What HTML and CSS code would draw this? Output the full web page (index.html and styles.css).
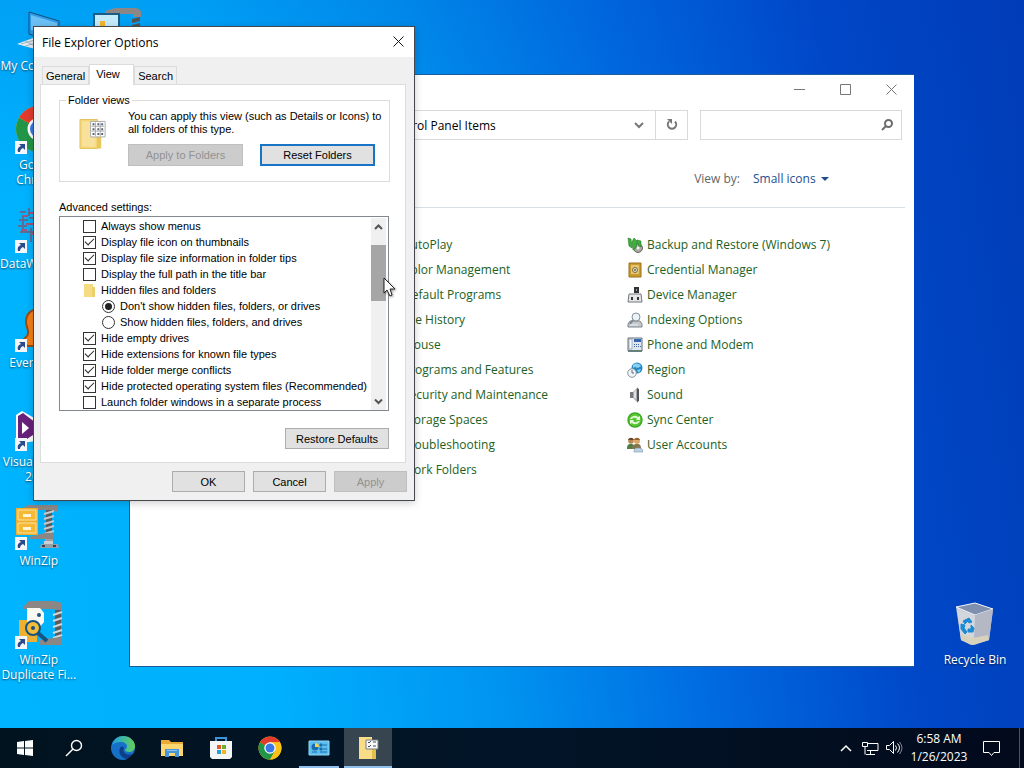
FILE: index.html
```html
<!DOCTYPE html>
<html lang="en">
<head>
    <meta charset="utf-8">
    <title>Desktop</title>
    <link rel="stylesheet" href="styles.css">
</head>
<body>

    <!-- shared symbols -->
    <svg class="symbols" width="0" height="0" aria-hidden="true">
        <symbol id="shortcut" viewBox="0 0 12 13">
            <rect width="12" height="13" fill="#f4f6fa"/>
            <path d="M4 3h6v6L8 7c-2 1-3 2-3 4H3C2 8 3 6 6 5z" fill="#2b4a8c"/>
        </symbol>
        <symbol id="clamp" viewBox="0 0 48 48">
            <path d="M6 8l7-4h29v7l-6-2H6z" fill="#8c8784"/>
            <path d="M31 9h6v24h-6z" fill="#5c5b5c"/>
            <path d="M29 13l10-3M29 18l10-3M29 23l10-3M29 28l10-3M29 33l10-3" stroke="#c6c8ca" stroke-width="2"/>
            <path d="M14 36l16-4h8v6H14z" fill="#8c8784"/>
            <path d="M30 38h8v5h5l1 4H25l1-4h4z" fill="#99a0a5"/>
            <path d="M29 40h9v3h-9z" fill="#c9cfd2"/>
            <path d="M27 44h3v2h-3zM38 44h3v2h-3z" fill="#33414f"/>
        </symbol>
        <symbol id="chrome" viewBox="0 0 48 48">
            <circle cx="24" cy="24" r="23" fill="#fbc116"/>
            <path d="M24 24L4.100 12.500A23 23 0 0 0 24 47l10-17.200z" fill="#229648"/>
            <path d="M24 24L4.100 12.500A23 23 0 0 1 43.900 12.500H24z" fill="#e23b2e"/>
            <path d="M24 12.500h19.900A23 23 0 0 1 24 47l10-17.200z" fill="#fbc116"/>
            <circle cx="24" cy="24" r="11.500" fill="#fff"/>
            <circle cx="24" cy="24" r="9" fill="#3b78e7"/>
        </symbol>
    </svg>

    <main class="desktop">
        <ul class="shortcuts">
            <li>
                <a href="#" class="shortcut">
                    <svg viewBox="0 0 48 48"><path d="M14 6l30 9v22l-30-9z" fill="#2e9be8" stroke="#174f7c"/><path d="M16 9l26 8v8L16 24z" fill="#6bc0f5"/><path d="M2 38l16-6 14 6-12 5z" fill="#e7eef3"/><path d="M6 38l14-4M10 40l14-4M10 35l12 6" stroke="#9fb4c2"/></svg>
                    <span>My&nbsp;Computer</span>
                </a>
            </li>
            <li>
                <a href="#" class="shortcut">
                    <svg viewBox="0 0 48 48"><use href="#chrome"/><use href="#shortcut" x="0" y="36" width="12" height="13"/></svg>
                    <span>Google Chrome</span>
                </a>
            </li>
            <li>
                <a href="#" class="shortcut">
                    <svg viewBox="0 0 48 48"><path d="M5 8h6M14 4v8M4 16h9M8 11v14M14 14h6v8M3 22h9M5 28h14M16 24v14M20 8v14M22 30v8" stroke="#5a6e96" stroke-width="2" fill="none"/><path d="M8 12h5M11 20h7M6 26h6M16 30h6M15 9h5" stroke="#a5547a" stroke-width="2"/><use href="#shortcut" x="0" y="36" width="12" height="13"/></svg>
                    <span>DataWrangler</span>
                </a>
            </li>
            <li>
                <a href="#" class="shortcut">
                    <svg viewBox="0 0 48 48"><path d="M24 6c-8 0-13 5-13 13 0 5 3 7 2 12-1 4-5 4-6 8l6 4h20V6z" fill="#f57f17" stroke="#9a4c12" stroke-width="2"/><use href="#shortcut" x="0" y="36" width="12" height="13"/></svg>
                    <span>Everything</span>
                </a>
            </li>
            <li>
                <a href="#" class="shortcut">
                    <svg viewBox="0 0 48 48"><path d="M1 13l6-4 14 8v22l-14 2-6-3z" fill="#fff"/><path d="M3 14l5-3 13 10v10L9 39l-6-2z" fill="#68217a"/><path d="M7 20l7 6-7 6z" fill="#fff"/><use href="#shortcut" x="0" y="36" width="12" height="13"/></svg>
                    <span>Visual Studio 2022</span>
                </a>
            </li>
            <li>
                <a href="#" class="shortcut">
                    <svg viewBox="0 0 48 48"><use href="#clamp"/><rect x="1" y="7" width="22" height="27" fill="#efaf2c"/><path d="M3 9h18v10H3zM3 22h18v10H3z" fill="#f5b935" stroke="#fbe3a0"/><path d="M8 13h8v3H8zM8 26h8v3H8z" fill="#fff6da"/><use href="#shortcut" x="0" y="36" width="12" height="13"/></svg>
                    <span>WinZip</span>
                </a>
            </li>
            <li>
                <a href="#" class="shortcut">
                    <svg viewBox="0 0 48 48"><path d="M9 6l5-5h25l8 2v8l-9-2H9z" fill="#8c8784"/><path d="M40 10h6v28h-6z" fill="#5c5b5c"/><path d="M38 15l9-3M38 21l9-3M38 27l9-3M38 33l9-3M38 38l9-3" stroke="#d3d5d7" stroke-width="2"/><path d="M24 40l14-2 9-1v8H24z" fill="#8c8784"/><path d="M4 20h18v22H4z" fill="#eeb02e"/><path d="M12 8h13l4 5v9l-5 6H12z" fill="#fbfaf2"/><circle cx="24" cy="15" r="2" fill="#20547e"/><circle cx="18" cy="28" r="7" fill="#f6bd3a" stroke="#17537f" stroke-width="2"/><circle cx="18" cy="28" r="2" fill="#17537f"/><path d="M23 33l9 8" stroke="#17537f" stroke-width="4"/><use href="#shortcut" x="0" y="36" width="12" height="13"/></svg>
                    <span>WinZip Duplicate&nbsp;Fi...</span>
                </a>
            </li>
        </ul>

        <svg class="zip-folder" viewBox="0 0 48 48"><path d="M12 4l10-3h22l4 3v6h-8V7H12z" fill="#8c8784"/><path d="M39 12l8-2v4l-8 2zM39 18l8-2v4l-8 2z" fill="#525456"/><path d="M1 7h25v30H1z" fill="#c4ebfb" stroke="#1c5d85" stroke-width="2"/><path d="M7 14h5v10H7z" fill="#f1b42f"/></svg>

        <a href="#" class="shortcut recycle-bin">
            <svg viewBox="0 0 48 48"><path d="M5 7l19-4 18 6-4 31-18 5-10-5z" fill="#c9cdd5"/><path d="M5 7l19-4 18 6-18 6z" fill="#7f8fae" stroke="#eef2f7" stroke-width="1"/><path d="M24 15l18-6-4 31-15 5z" fill="#b3b8c4"/><path d="M6 9l4 31 12 5 2-29z" fill="#d3d6dc"/><path d="M10 40l12 5 16-5-1-5-15 3-12-4z" fill="#d8d2bd"/><path d="M12 21l6-3 3 4-3 1-1-2-3 3zM10 24l4 1-1 3 3 4-2 2-4-5zM20 25l3 3-1 4h-5v-3h3z" fill="#1a8ad4" stroke="#1a8ad4"/></svg>
            <span>Recycle Bin</span>
        </a>

        <!-- Control Panel -->
        <section class="window">
            <div class="window-buttons">
                <button type="button" aria-label="Minimize"><svg width="11" height="11"><path d="M0 5.500h11"/></svg></button>
                <button type="button" aria-label="Maximize"><svg width="11" height="11"><path d="M.5.5h10v10H.5z"/></svg></button>
                <button type="button" aria-label="Close"><svg width="11" height="11"><path d="M.5.5l10 10M10.500.5l-10 10"/></svg></button>
            </div>
            <div class="nav-row">
                <div class="address">
                    <span>All Control Panel Items</span>
                    <button type="button" aria-label="Previous locations"><svg width="10" height="8"><path d="M1 1l4 4 4-4" stroke="#777" stroke-width="2" fill="none"/></svg></button>
                    <button type="button" class="refresh" aria-label="Refresh"><svg width="12" height="12"><path d="M3 3.500a4.200 4.200 0 1 0 6 0" stroke="#777" stroke-width="2" fill="none"/><path d="M1 1h5v5z" fill="#777"/></svg></button>
                </div>
                <div class="search">
                    <input type="text" aria-label="Search Control Panel">
                    <svg width="12" height="12"><circle cx="7.500" cy="4.500" r="3.500" stroke="#6c6c6c" stroke-width="2" fill="none"/><path d="M5 7l-4 4" stroke="#6c6c6c" stroke-width="2"/></svg>
                </div>
            </div>
            <div class="view-by">
                <label for="view">View by:</label>
                <div class="view-select">
                    <select id="view">
                        <option>Small icons</option>
                    </select>
                </div>
            </div>
            <div class="items">
                <ul>
                    <li><a href="#">AutoPlay</a></li>
                    <li><a href="#">Color Management</a></li>
                    <li><a href="#">Default Programs</a></li>
                    <li><a href="#">File History</a></li>
                    <li><a href="#">Mouse</a></li>
                    <li><a href="#">Programs and Features</a></li>
                    <li><a href="#">Security and Maintenance</a></li>
                    <li><a href="#">Storage Spaces</a></li>
                    <li><a href="#">Troubleshooting</a></li>
                    <li><a href="#">Work Folders</a></li>
                </ul>
                <ul>
                    <li><svg viewBox="0 0 16 16"><circle cx="11" cy="11" r="4.500" fill="#a9a9a4" stroke="#66675f"/><circle cx="11" cy="11" r="1.500" fill="#f2f2ee"/><path d="M1 1l3 1 1 9-3-2zM5 5l2-4 3 3-1 7-3 2zM10 3l4 1v6l-3-2z" fill="#3fae3a" stroke="#257c2a" stroke-width=".6"/></svg><a href="#">Backup and Restore (Windows 7)</a></li>
                    <li><svg viewBox="0 0 16 16"><path d="M2 1h12v14H2z" fill="#c99b2d" stroke="#9a701b"/><path d="M4 3h8v9H4z" fill="#e5c670"/><circle cx="8" cy="8" r="2.500" fill="#e8e4d6" stroke="#7d6a35"/><circle cx="8" cy="8" r="1" fill="#665"/></svg><a href="#">Credential Manager</a></li>
                    <li><svg viewBox="0 0 16 16"><path d="M7 0h5v6H7z" fill="#2f3134"/><path d="M2 7h12l1 8H1z" fill="#e5e6e8" stroke="#75777b"/><path d="M4 10h2v3H4zM10 10h2v3h-2z" fill="#333"/><path d="M9 2h1v2H9z" fill="#a0a0a0"/></svg><a href="#">Device Manager</a></li>
                    <li><svg viewBox="0 0 16 16"><path d="M3 9h10l2 3v3H1v-3z" fill="#c3c9ce" stroke="#7d858c"/><circle cx="9" cy="5" r="4" fill="#eaf3f8" stroke="#879199"/><path d="M6 8l-3 4" stroke="#7f8990" stroke-width="2"/><path d="M3 13h8" stroke="#eef0f2"/></svg><a href="#">Indexing Options</a></li>
                    <li><svg viewBox="0 0 16 16"><path d="M1 1h14v13H1z" fill="#dfe7ee" stroke="#60707d"/><path d="M2 2h3v10H2z" fill="#f9fafb" stroke="#7a8893" stroke-width=".6"/><path d="M7 2h7v3H7z" fill="#3465ae"/><path d="M7 7h1v1H7zM9 7h1v1H9zM11 7h1v1h-1zM7 9h1v1H7zM9 9h1v1H9zM11 9h1v1h-1zM13 9h1v1h-1z" fill="#4269a4"/><path d="M1 13h14v2H1z" fill="#687f80"/></svg><a href="#">Phone and Modem</a></li>
                    <li><svg viewBox="0 0 16 16"><circle cx="10" cy="6" r="5.500" fill="#2287c5"/><path d="M6 3c3-3 7-1 8 1l-3 2-3-1-2 1zM10 8l4-1-2 4z" fill="#8bd1ee"/><circle cx="5" cy="11" r="4.300" fill="#f1f5f8" stroke="#8997a2"/><path d="M5 8v3h2" stroke="#5d6c78" fill="none"/></svg><a href="#">Region</a></li>
                    <li><svg viewBox="0 0 16 16"><path d="M3 5h3v6H3z" fill="#77797c"/><path d="M6 5l5-5v16l-5-5z" fill="#a8abae"/><path d="M10 1l2 1v12l-2 1z" fill="#505357"/><path d="M7 5l2-2v9L7 11z" fill="#dfe1e2"/></svg><a href="#">Sound</a></li>
                    <li><svg viewBox="0 0 16 16"><circle cx="8" cy="8" r="7.700" fill="#38a720"/><circle cx="8" cy="8" r="6.500" fill="#58c532"/><path d="M3 7c2-4 6-4 8-2l2-1v4H9l1-1c-2-2-4-1-5 0zM13 9c-2 4-6 4-8 2l-2 1V8h4L6 9c2 2 4 1 5 0z" fill="#e2f7d6"/></svg><a href="#">Sync Center</a></li>
                    <li><svg viewBox="0 0 16 16"><path d="M0 12c0-5 2-5 4-5s4 1 4 5z" fill="#4d7e43"/><circle cx="4" cy="4" r="2.800" fill="#b98850"/><path d="M1 3c1-3 5-3 6 0z" fill="#6a4524"/><path d="M5 12c0-4 2-5 5-5s4 1 4 5z" fill="#86764f"/><circle cx="10" cy="4" r="3" fill="#dda76c"/><path d="M7 3c1-3 5-3 6 0z" fill="#94622c"/><path d="M7 15c0-4 2-4 4-4s5 0 5 4z" fill="#bcd2e6" stroke="#7b92a8" stroke-width=".6"/></svg><a href="#">User Accounts</a></li>
                </ul>
            </div>
        </section>

        <!-- File Explorer Options -->
        <section class="dialog">
            <div class="dialog-title">
                <h1>File Explorer Options</h1>
                <button type="button" aria-label="Close"><svg width="11" height="11"><path d="M.5.5l10 10M10.500.5l-10 10" stroke="#111"/></svg></button>
            </div>
            <form class="dialog-body">
                <div class="tabs">
                    <button type="button">General</button>
                    <button type="button" class="active">View</button>
                    <button type="button">Search</button>
                </div>
                <div class="panel">
                    <fieldset>
                        <legend>Folder views</legend>
                        <svg class="folder-icon" viewBox="0 0 30 32"><path d="M1 1h18v30H1z" fill="#f4d878" stroke="#e3c25b"/><path d="M19 4h4v27h-4z" fill="#e9c75d"/><path d="M3 3h14v26H3z" fill="#f8e19a"/><path d="M12 3h15v16H12z" fill="#fff" stroke="#aaa"/><path d="M13 8h13M13 13h13M17 4v14M22 4v14" stroke="#aaa"/><path d="M14 5h2v2h-2zM19 5h2v2h-2zM23 5h2v2h-2zM14 10h2v2h-2zM19 10h2v2h-2zM23 10h2v2h-2zM14 15h2v2h-2zM19 15h2v2h-2zM23 15h2v2h-2z" fill="#5a6474"/></svg>
                        <div class="folder-views">
                            <p>You can apply this view (such as Details or Icons) to all folders of this type.</p>
                            <div class="folder-buttons">
                                <button type="button" class="btn" disabled>Apply to Folders</button>
                                <button type="button" class="btn default">Reset Folders</button>
                            </div>
                        </div>
                    </fieldset>

                    <h2>Advanced settings:</h2>
                    <div class="settings">
                        <div class="settings-list">
                            <label><input type="checkbox">Always show menus</label>
                            <label><input type="checkbox" checked>Display file icon on thumbnails</label>
                            <label><input type="checkbox" checked>Display file size information in folder tips</label>
                            <label><input type="checkbox">Display the full path in the title bar</label>
                            <div class="group"><svg viewBox="0 0 13 13"><path d="M1 0h9v3h2v10H1z" fill="#f5dc82"/><path d="M9 3h3v10H9z" fill="#ecd06c"/></svg>Hidden files and folders</div>
                            <label class="sub"><input type="radio" name="hidden" checked>Don't show hidden files, folders, or drives</label>
                            <label class="sub"><input type="radio" name="hidden">Show hidden files, folders, and drives</label>
                            <label><input type="checkbox" checked>Hide empty drives</label>
                            <label><input type="checkbox" checked>Hide extensions for known file types</label>
                            <label><input type="checkbox" checked>Hide folder merge conflicts</label>
                            <label><input type="checkbox" checked>Hide protected operating system files (Recommended)</label>
                            <label><input type="checkbox">Launch folder windows in a separate process</label>
                        </div>
                        <div class="scrollbar">
                            <button type="button" aria-label="Scroll up"><svg width="9" height="7"><path d="M1 5l3.500-3.500L8 5"/></svg></button>
                            <div class="thumb"></div>
                            <button type="button" aria-label="Scroll down"><svg width="9" height="7"><path d="M1 1.500L4.500 5 8 1.500"/></svg></button>
                        </div>
                    </div>
                    <button type="button" class="btn restore">Restore Defaults</button>
                </div>
                <div class="dialog-buttons">
                    <button type="button" class="btn">OK</button>
                    <button type="button" class="btn">Cancel</button>
                    <button type="button" class="btn" disabled>Apply</button>
                </div>
            </form>
        </section>

        <svg class="cursor" viewBox="0 0 14 21"><path d="M1 1v15l3-3 3 6 2-1-2-6h5z" fill="#fff" stroke="#222"/></svg>
    </main>

    <footer class="taskbar">
        <button type="button" aria-label="Start"><svg width="16" height="16" viewBox="0 0 16 16"><path d="M0 2l7-1v6.500H0zM8 1l8-1v7.500H8zM0 8.500h7V15l-7-1zM8 8.500h8V16l-8-1z" fill="#fff"/></svg></button>
        <button type="button" aria-label="Search"><svg width="18" height="18" viewBox="0 0 18 18"><circle cx="11.500" cy="6.500" r="5" stroke="#fff" stroke-width="1.400" fill="none"/><path d="M8 10l-7 7" stroke="#fff" stroke-width="1.400"/></svg></button>
        <button type="button" aria-label="Microsoft Edge"><svg width="24" height="24" viewBox="0 0 24 24"><defs><linearGradient id="edge-a" x1="0" y1="0" x2="1" y2="0"><stop offset="0" stop-color="#1fa4dd"/><stop offset="1" stop-color="#62cf5a"/></linearGradient></defs><circle cx="12" cy="12" r="12" fill="#1670c8"/><path d="M1 9C3 3 7 0 12 0c7 0 12 5 12 10 0 4-3 6-6 6-2 0-4-1-4-2 0-1 2-1 2-4 0-2-3-4-6-4-4 0-7 1-9 3z" fill="url(#edge-a)"/><path d="M9 12c-2 5 1 10 7 11 3-1 5-3 7-6-3 2-7 2-9 0-2-1-2-3-1-5-1-2-3-2-4 0z" fill="#0c3f87"/><path d="M16 23c2-1 5-3 8-8v9h-9z" fill="#03131f"/></svg></button>
        <button type="button" aria-label="File Explorer"><svg width="22" height="20" viewBox="0 0 22 20"><path d="M0 2h8l2 2h12v14H0z" fill="#e9ab35"/><path d="M0 6h22v12H0z" fill="#fbd671"/><path d="M4 11h14v8h-4v-4H8v4H4z" fill="#4796d9"/><path d="M6 12h10v1H6z" fill="#8bc3ee"/></svg></button>
        <button type="button" aria-label="Microsoft Store"><svg width="24" height="24" viewBox="0 0 24 24"><path d="M7 6V2h10v4" fill="none" stroke="#3a95da" stroke-width="2"/><path d="M1 5h22v16l-2 2H3l-2-2z" fill="#f3f5f6"/><path d="M8 9h4v4H8z" fill="#e25a2b"/><path d="M13 9h4v4h-4z" fill="#6fae2c"/><path d="M8 14h4v4H8z" fill="#249fde"/><path d="M13 14h4v4h-4z" fill="#f3b41f"/></svg></button>
        <button type="button" aria-label="Google Chrome"><svg width="24" height="24"><use href="#chrome"/></svg></button>
        <button type="button" class="open" aria-label="Control Panel"><svg width="22" height="16" viewBox="0 0 22 16"><path d="M1 1h20v14H1z" fill="#5bbdf0" stroke="#8edaf9"/><circle cx="7" cy="7" r="3.500" fill="#1b6cae"/><path d="M7 7V3a4 4 0 0 1 4 4z" fill="#f6d24a"/><path d="M12 4h2v2h-2zM12 8h2v2h-2zM15 5h4M15 9h4M12 12h7M4 12h5" stroke="#1a6ea7" fill="#1a6ea7"/></svg></button>
        <button type="button" class="open current" aria-label="File Explorer Options"><svg width="22" height="24" viewBox="0 0 22 24"><path d="M2 1h13v22H2z" fill="#f8dd86"/><path d="M15 8h4v15h-4z" fill="#e5bd4d"/><path d="M9 4h12v9H9z" fill="#f7f8fa" stroke="#777c84"/><path d="M11 6l1 1 2-2M16 6h3M11 10l1 1 2-2M16 10h3" stroke="#444e60" fill="none"/></svg></button>

        <div class="tray">
            <button type="button" aria-label="Show hidden icons"><svg width="12" height="8"><path d="M1 7l5-5 5 5" stroke-width="1.500"/></svg></button>
            <button type="button" aria-label="Network"><svg width="17" height="14"><path d="M5 2.500h11v7H5M4 13.500h9M8.500 9.500v4M.5 1.500h5v4h-5zM3 5.500v8"/></svg></button>
            <button type="button" aria-label="Volume"><svg width="17" height="14"><path d="M.5 4.500h3l4-4v12l-4-4h-3zM9.500 4.500q2 2 0 5M11.500 2.500q4 4 0 9"/><path d="M13.500 1q5 6 0 12" opacity=".5"/></svg></button>
            <div class="clock"><span>6:58 AM</span><span>1/26/2023</span></div>
            <button type="button" class="notes" aria-label="Notifications"><svg width="17" height="17"><path d="M.5 1.500h16v11H11l-2.500 3-2.500-3H.5z"/></svg></button>
        </div>
    </footer>

</body>
</html>
```
FILE: styles.css
```css
* {
    box-sizing: border-box;
}

body {
    margin: 0;
    min-height: 100vh;
    display: flex;
    flex-direction: column;
    font-family: "Open Sans", "Noto Sans", sans-serif;
    font-size: 12px;
    background:
        linear-gradient(rgba(0, 60, 190, 0.15), transparent 200px),
        linear-gradient(82deg, #00b4ff 0%, #00b0fe 25%, #0094f0 45%, #0068e0 65%, #0048c8 82%, #003cb6 100%);
}

button,
input,
select {
    font: inherit;
    color: inherit;
    margin: 0;
}

button {
    padding: 0;
    border: none;
    background: none;
}

a {
    color: inherit;
    text-decoration: none;
}

ul {
    list-style: none;
    margin: 0;
    padding: 0;
}

.symbols {
    position: absolute;
}

.desktop {
    flex: 1;
    position: relative;
    overflow: hidden;
}

/* desktop icons */
.shortcuts {
    display: grid;
    grid-auto-rows: 99px;
    width: 76px;
    margin: 6px 0 0;
}

.shortcut {
    display: flex;
    flex-direction: column;
    align-items: center;
    gap: 4px;
    color: #fff;
    line-height: 15px;
    text-align: center;
    text-shadow: 0 1px 2px rgba(0, 0, 0, 0.6);
}

.shortcut svg {
    width: 48px;
    height: 48px;
    overflow: visible;
}

.zip-folder {
    position: absolute;
    left: 93px;
    top: 7px;
    width: 48px;
}

.recycle-bin {
    position: absolute;
    right: 11px;
    bottom: 61px;
    width: 76px;
}

/* control panel window */
.window {
    position: absolute;
    top: 74px;
    left: 129px;
    right: 110px;
    bottom: 61px;
    border: 1px solid #1d5c9c;
    border-right: none;
    background: #fff;
}

.window-buttons {
    display: flex;
    justify-content: flex-end;
}

.window-buttons button {
    width: 46px;
    height: 30px;
}

.window-buttons path {
    fill: none;
    stroke: #777;
}

.nav-row {
    display: flex;
    gap: 12px;
    padding: 5px 12px 0;
}

.address {
    flex: 1;
    display: flex;
    align-items: center;
    height: 30px;
    padding-left: 226px;
    border: 1px solid #d9d9d9;
}

.address span {
    flex: 1;
}

.address button {
    width: 32px;
    height: 28px;
}

.address .refresh {
    border-left: 1px solid #d9d9d9;
}

.search {
    display: flex;
    align-items: center;
    width: 202px;
    height: 30px;
    padding-right: 8px;
    border: 1px solid #d9d9d9;
}

.search input {
    flex: 1;
    min-width: 0;
    border: none;
    outline: none;
}

.view-by {
    display: flex;
    justify-content: flex-end;
    align-items: center;
    gap: 13px;
    height: 68px;
    margin-right: 9px;
    padding: 10px 76px 0 0;
    border-bottom: 1px solid #d5dfe5;
    color: #666;
}

.view-select {
    display: flex;
    align-items: center;
    gap: 5px;
    color: #1e4f8f;
}

.view-select::after {
    content: "";
    border: 4px solid transparent;
    border-top-color: #1e4f8f;
    border-bottom: none;
}

.view-select select {
    appearance: none;
    border: none;
    padding: 0;
    background: none;
}

.items {
    display: grid;
    grid-template-columns: 242px 1fr;
    margin: 24px 0 0 255px;
    color: #1c6124;
}

.items li {
    display: flex;
    align-items: center;
    gap: 4px;
    height: 25px;
}

.items ul:first-child {
    padding-left: 18px;
}

.items svg {
    width: 16px;
    height: 16px;
}

/* options dialog */
.dialog {
    position: absolute;
    left: 33px;
    top: 26px;
    width: 382px;
    border: 1px solid #44484c;
    background: #f0f0f0;
    box-shadow: 0 2px 8px rgba(0, 0, 0, 0.2);
}

.dialog-title {
    display: flex;
    justify-content: space-between;
    align-items: center;
    height: 30px;
    padding: 0 10px 0 8px;
    background: #fff;
}

.dialog-title h1 {
    margin: 0;
    font-size: 12px;
    font-weight: normal;
}

.dialog-body {
    padding: 7px 7px 8px 6px;
    font-family: "Liberation Sans", Arial, sans-serif;
    font-size: 11px;
}

.tabs {
    display: flex;
    align-items: flex-end;
    padding-left: 2px;
}

.tabs button {
    height: 18px;
    padding: 0 3px;
    border: 1px solid #dcdcdc;
    border-bottom: none;
}

.tabs .active {
    width: 45px;
    height: 21px;
    margin-bottom: -1px;
    padding: 0 14px 2px 6px;
    background: #fff;
    z-index: 1;
}

.panel {
    display: flex;
    flex-direction: column;
    margin-right: 1px;
    padding: 9px 16px 13px 18px;
    border: 1px solid #dcdcdc;
    background: #fff;
}

fieldset {
    display: flex;
    gap: 20px;
    height: 88px;
    margin: 0;
    padding: 4px 14px 0 19px;
    border: 1px solid #dcdcdc;
}

legend {
    margin-left: -13px;
    padding: 0 2px;
}

.folder-icon {
    flex: none;
    width: 29px;
    height: 32px;
    margin-top: 8px;
}

.folder-views p {
    margin: 0 -8px 8px 0;
    line-height: 13px;
}

.folder-buttons {
    display: flex;
    gap: 17px;
}

.btn {
    width: 73px;
    height: 21px;
    border: 1px solid #adadad;
    background: #e1e1e1;
}

.btn:disabled {
    border-color: #bfbfbf;
    background: #ccc;
    color: #929292;
}

.folder-buttons .btn {
    width: 115px;
    height: 22px;
}

.btn.default {
    border: 2px solid #1874c5;
}

.panel h2 {
    margin: 19px 0 2px;
    font-size: 11px;
    font-weight: normal;
    line-height: 13px;
}

.settings {
    display: flex;
    justify-content: space-between;
    padding: 1px 2px 0 23px;
    border: 1px solid #828790;
}

.settings label,
.settings .group {
    display: flex;
    align-items: center;
    gap: 5px;
    height: 16px;
    white-space: nowrap;
}

.settings .sub {
    padding-left: 19px;
}

.settings svg {
    flex: none;
}

.group svg {
    width: 13px;
    height: 13px;
}

.settings input {
    appearance: none;
    flex: none;
    display: grid;
    place-items: center;
    width: 13px;
    height: 13px;
    border: 1px solid #333;
    background: #fff;
}

.settings input[type="radio"] {
    border-radius: 50%;
}

.settings input[type="checkbox"]:checked::before {
    content: "";
    width: 8px;
    height: 4px;
    margin-bottom: 3px;
    border: solid #222;
    border-width: 0 0 1px 1px;
    transform: rotate(-45deg);
}

.settings input[type="radio"]:checked::before {
    content: "";
    width: 7px;
    height: 7px;
    border-radius: 50%;
    background: #222;
}

.scrollbar {
    display: flex;
    flex-direction: column;
    width: 15px;
    background: #f0f0f0;
}

.scrollbar button {
    height: 18px;
    line-height: 0;
}

.scrollbar button:last-child {
    margin-top: auto;
}

.scrollbar path {
    fill: none;
    stroke: #555;
    stroke-width: 2;
}

.thumb {
    height: 56px;
    margin-top: 9px;
    background: #a6a6a6;
}

.restore {
    align-self: flex-end;
    width: 104px;
    margin-top: 17px;
}

.dialog-buttons {
    display: flex;
    justify-content: flex-end;
    gap: 8px;
    padding-top: 8px;
}

.cursor {
    position: absolute;
    left: 383px;
    top: 277px;
    width: 14px;
    height: 21px;
    filter: drop-shadow(1px 1px 1px rgba(0, 0, 0, 0.4));
}

/* taskbar */
.taskbar {
    display: flex;
    gap: 1px;
    height: 40px;
    padding-left: 1px;
    background: linear-gradient(90deg, #01131f, #021528 50%, #020a1c);
    color: #fff;
}

.taskbar > button {
    display: grid;
    place-items: center;
    width: 48px;
    height: 40px;
}

.taskbar .open {
    background: linear-gradient(#8fc0ee, #8fc0ee) center bottom / 40px 2px no-repeat;
}

.taskbar .current {
    background: linear-gradient(#8fc0ee, #8fc0ee) center bottom / 48px 2px no-repeat #36454f;
}

.tray {
    display: flex;
    align-items: center;
    margin-left: auto;
    margin-right: 4px;
    border-right: 1px solid #47536a;
}

.tray button {
    display: grid;
    place-items: center;
    width: 24px;
    height: 40px;
}

.tray path {
    fill: none;
    stroke: #fff;
}

.clock {
    display: flex;
    flex-direction: column;
    align-items: center;
    width: 66px;
    line-height: 18px;
}

.tray .notes {
    width: 38px;
    margin-right: 9px;
}
```
